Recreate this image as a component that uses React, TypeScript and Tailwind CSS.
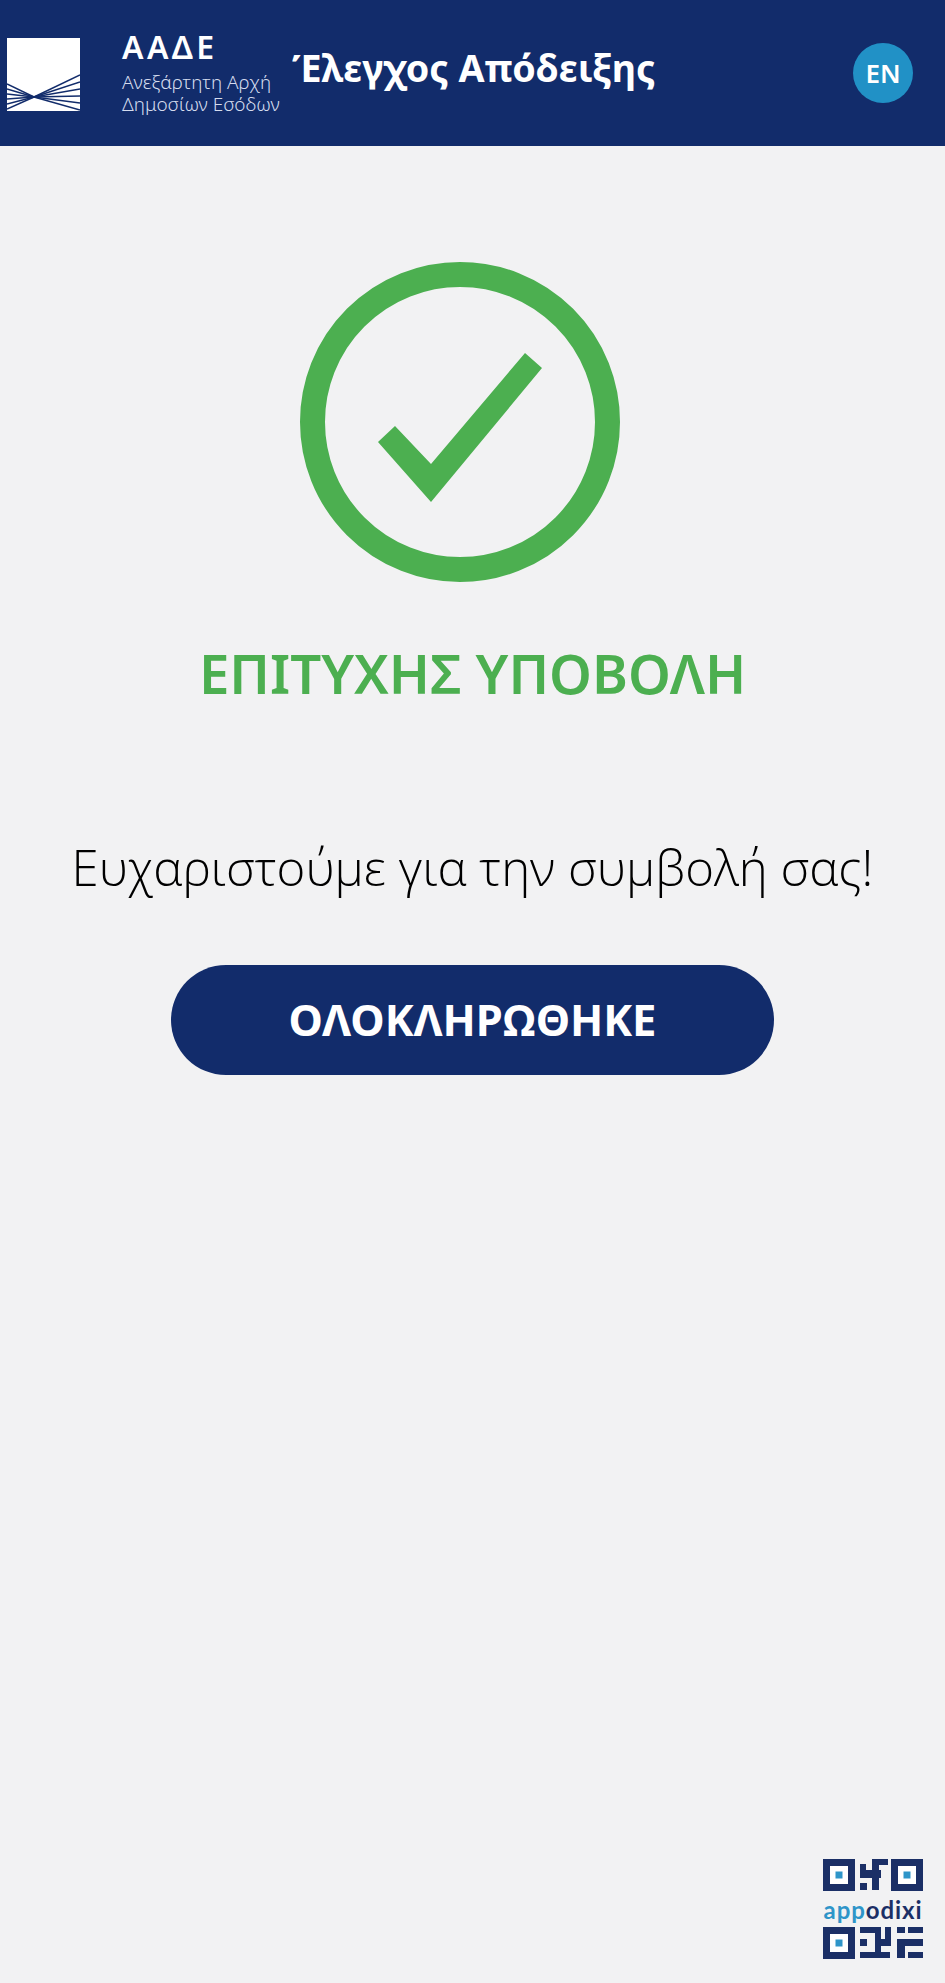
import React from "react";

function AadeLogo() {
  const left = [46, 51, 56, 61, 66, 71];
  const right = [37, 44, 51, 58, 65, 72];
  return (
    <svg width="73" height="73" viewBox="0 0 73 73" className="mt-[3px] shrink-0">
      <rect width="73" height="73" fill="#fff" />
      <g stroke="#122c6b" strokeWidth="1.5">
        {left.map((y) => (
          <line key={y} x1="0" y1={y} x2="27" y2="59" />
        ))}
        {right.map((y) => (
          <line key={y} x1="73" y1={y} x2="27" y2="59" />
        ))}
      </g>
    </svg>
  );
}

function Finder({ x }: { x: number }) {
  return (
    <g transform={`translate(${x} 0)`}>
      <rect x="3.5" y="3.5" width="25" height="25" fill="#fff" stroke="#1b2f66" strokeWidth="7" />
      <rect x="12.5" y="12.5" width="7" height="7" fill="#2e95c9" />
    </g>
  );
}

function AppodixiBadge() {
  return (
    <div className="flex w-[100px] flex-col">
      <svg width="100" height="32" viewBox="0 0 100 32" className="block">
        <Finder x={0} />
        <g fill="#1b2f66">
          <rect x="37" y="5" width="6" height="14" />
          <rect x="37" y="11" width="21" height="8" />
          <rect x="49" y="0" width="16" height="6" />
          <rect x="49" y="6" width="7" height="25" />
          <rect x="37" y="24" width="7" height="7" />
        </g>
        <Finder x={68} />
      </svg>
      <div className="mt-[7px] flex h-[24px] items-center justify-center font-['Lato',sans-serif] text-[24px] leading-none font-bold tracking-[0.9px] text-[#1b2f66]">
        <span className="text-[#2e95c9]">app</span>
        <span>odixi</span>
      </div>
      <svg width="100" height="32" viewBox="0 0 100 32" className="mt-[5px] block">
        <Finder x={0} />
        <g fill="#1b2f66">
          <rect x="37" y="0" width="21" height="6" />
          <rect x="52" y="0" width="6" height="31" />
          <rect x="37" y="12" width="7" height="7" />
          <rect x="37" y="25" width="30" height="6" />
          <rect x="62" y="0" width="6" height="13" />
          <rect x="58" y="12" width="10" height="7" />
          <rect x="74" y="0" width="8" height="6" />
          <rect x="85" y="0" width="15" height="6" />
          <rect x="74" y="12" width="26" height="7" />
          <rect x="74" y="19" width="8" height="12" />
          <rect x="85" y="25" width="15" height="6" />
        </g>
      </svg>
    </div>
  );
}

export default function App() {
  return (
    <div className="flex min-h-[1983px] flex-col bg-[#f2f2f3] font-['Noto_Sans',sans-serif]">
      <header className="flex h-[146px] items-center bg-[#122c6b] pr-[32px] pl-[7px] text-white">
        <AadeLogo />
        <div className="ml-[42px] w-[166px] shrink-0">
          <div className="text-[32px] leading-[32px] font-semibold tracking-[3.4px]">ΑΑΔΕ</div>
          <div className="mt-[8px] text-[19px] leading-[22px] font-light text-[#d5dcee]">
            <div>Ανεξάρτητη Αρχή</div>
            <div className="whitespace-nowrap">Δημοσίων Εσόδων</div>
          </div>
        </div>
        <h1 className="mb-[10px] ml-[4px] text-[37.7px] leading-none font-bold whitespace-nowrap">
          Έλεγχος Απόδειξης
        </h1>
        <button className="ml-auto flex h-[60px] w-[60px] items-center justify-center rounded-full bg-[#2191c6] text-[26px] font-semibold">
          EN
        </button>
      </header>

      <main className="flex flex-1 flex-col items-center">
        <svg width="320" height="320" viewBox="0 0 320 320" className="mt-[116px] mr-[25px]">
          <circle cx="160" cy="160" r="147.5" fill="none" stroke="#4caf50" strokeWidth="25" />
          <polygon points="78,180 95,164 131,202 225,91 242,106 131,240" fill="#4caf50" />
        </svg>
        <h2 className="mt-[56px] text-[54.5px] leading-[70px] font-semibold text-[#4caf50]">
          ΕΠΙΤΥΧΗΣ ΥΠΟΒΟΛΗ
        </h2>
        <p className="mt-[125px] font-['Open_Sans',sans-serif] text-[49.1px] leading-[68px] font-light text-black">
          Ευχαριστούμε για την συμβολή σας!
        </p>
        <button className="mt-[64px] flex h-[110px] w-[603px] items-center justify-center rounded-[55px] bg-[#122c6b] text-[43.5px] font-bold text-white">
          ΟΛΟΚΛΗΡΩΘΗΚΕ
        </button>
      </main>

      <footer className="flex justify-end pr-[22px] pb-[24px]">
        <AppodixiBadge />
      </footer>
    </div>
  );
}
